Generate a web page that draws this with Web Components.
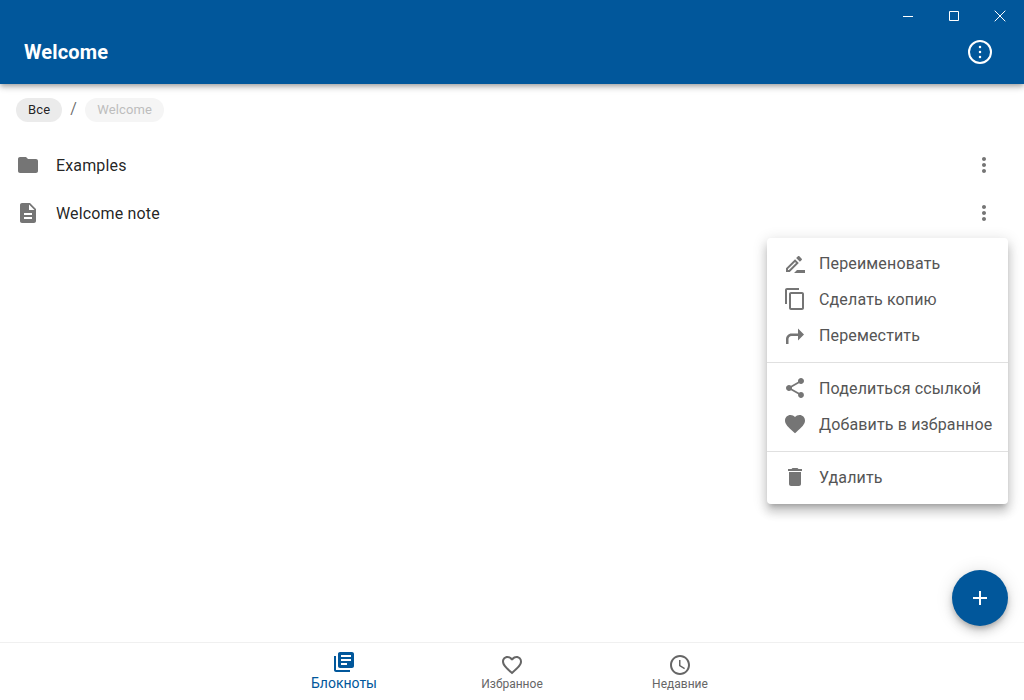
<!DOCTYPE html>
<html lang="ru">
<head>
<meta charset="utf-8">
<title>Welcome</title>
<style>
  html, body { margin: 0; height: 100%; overflow: hidden; background: #fff; }
  body { font-family: Roboto, "Liberation Sans", sans-serif; }
</style>
</head>
<body>
<app-shell>
  <app-header slot="header" title="Welcome"></app-header>
  <bread-crumbs>
    <crumb-chip>Все</crumb-chip>
    <crumb-chip disabled>Welcome</crumb-chip>
  </bread-crumbs>
  <list-row icon="folder">Examples</list-row>
  <list-row icon="note">Welcome note</list-row>
  <context-menu slot="overlay">
    <menu-item icon="rename">Переименовать</menu-item>
    <menu-item icon="copy">Сделать копию</menu-item>
    <menu-item icon="move">Переместить</menu-item>
    <menu-divider></menu-divider>
    <menu-item icon="share">Поделиться ссылкой</menu-item>
    <menu-item icon="heart">Добавить в избранное</menu-item>
    <menu-divider></menu-divider>
    <menu-item icon="trash">Удалить</menu-item>
  </context-menu>
  <fab-button slot="overlay"></fab-button>
  <bottom-nav slot="footer">
    <nav-item icon="books" active>Блокноты</nav-item>
    <nav-item icon="heart-line">Избранное</nav-item>
    <nav-item icon="clock">Недавние</nav-item>
  </bottom-nav>
</app-shell>

<script>
const ICONS = {
  folder: 'M10 4H4c-1.1 0-1.99.9-1.99 2L2 18c0 1.1.9 2 2 2h16c1.1 0 2-.9 2-2V8c0-1.1-.9-2-2-2h-8l-2-2z',
  note: 'M14 2H6c-1.1 0-1.99.9-1.99 2L4 20c0 1.1.89 2 1.99 2H18c1.1 0 2-.9 2-2V8l-6-6zm2 16H8v-2h8v2zm0-4H8v-2h8v2zm-3-5V3.5L18.5 9H13z',
  more: 'M12 8c1.1 0 2-.9 2-2s-.9-2-2-2-2 .9-2 2 .9 2 2 2zm0 2c-1.1 0-2 .9-2 2s.9 2 2 2 2-.9 2-2-.9-2-2-2zm0 6c-1.1 0-2 .9-2 2s.9 2 2 2 2-.9 2-2-.9-2-2-2z',
  rename: 'M11 22l3-3h8v3zM12.06 8.19L3 17.25V21h3.75l9.06-9.06-3.75-3.75zM5.92 19H5v-.92l7.06-7.06.92.92L5.92 19zM18.71 9.04c.39-.39.39-1.02 0-1.41l-2.34-2.34c-.2-.2-.45-.29-.71-.29s-.51.1-.7.29l-1.83 1.83 3.75 3.75 1.83-1.83z',
  copy: 'M16 1H4c-1.1 0-2 .9-2 2v14h2V3h12V1zm3 4H8c-1.1 0-2 .9-2 2v14c0 1.1.9 2 2 2h11c1.1 0 2-.9 2-2V7c0-1.1-.9-2-2-2zm0 16H8V7h11v14z',
  move: 'M21 11.5l-6-6v5H8.5C5.5 10.5 3 13 3 16v5h2.5v-5c0-1.5 1.2-3 3-3H15v4.5z',
  share: 'M18 16.08c-.76 0-1.44.3-1.96.77L8.91 12.7c.05-.23.09-.46.09-.7s-.04-.47-.09-.7l7.05-4.11c.54.5 1.25.81 2.04.81 1.66 0 3-1.34 3-3s-1.34-3-3-3-3 1.34-3 3c0 .24.04.47.09.7L8.04 9.81C7.5 9.31 6.79 9 6 9c-1.66 0-3 1.34-3 3s1.34 3 3 3c.79 0 1.5-.31 2.04-.81l7.12 4.16c-.05.21-.08.43-.08.65 0 1.61 1.31 2.92 2.92 2.92s2.92-1.31 2.92-2.92-1.31-2.92-2.92-2.92z',
  heart: 'M12 21.35l-1.45-1.32C5.4 15.36 2 12.28 2 8.5 2 5.42 4.42 3 7.5 3c1.74 0 3.41.81 4.5 2.09C13.09 3.81 14.76 3 16.5 3 19.58 3 22 5.42 22 8.5c0 3.78-3.4 6.86-8.55 11.54L12 21.35z',
  'heart-line': 'M16.5 3c-1.74 0-3.41.81-4.5 2.09C10.91 3.81 9.24 3 7.5 3 4.42 3 2 5.42 2 8.5c0 3.78 3.4 6.86 8.55 11.54L12 21.35l1.45-1.32C18.6 15.36 22 12.28 22 8.5 22 5.42 19.58 3 16.5 3zm-4.4 15.55l-.1.1-.1-.1C7.14 14.24 4 11.39 4 8.5 4 6.5 5.5 5 7.5 5c1.54 0 3.04.99 3.57 2.36h1.87C13.46 5.99 14.96 5 16.5 5c2 0 3.5 1.5 3.5 3.5 0 2.89-3.14 5.74-7.9 10.05z',
  trash: 'M6 19c0 1.1.9 2 2 2h8c1.1 0 2-.9 2-2V7H6v12zM19 4h-3.5l-1-1h-5l-1 1H5v2h14V4z',
  books: 'M4 6H2v14c0 1.1.9 2 2 2h14v-2H4V6zm16-4H8c-1.1 0-2 .9-2 2v12c0 1.1.9 2 2 2h12c1.1 0 2-.9 2-2V4c0-1.1-.9-2-2-2zm-1 9H9V9h10v2zm-4 4H9v-2h6v2zm4-8H9V5h10v2z',
  clock: 'M11.99 2C6.47 2 2 6.48 2 12s4.47 10 9.99 10C17.52 22 22 17.52 22 12S17.52 2 11.99 2zM12 20c-4.42 0-8-3.58-8-8s3.58-8 8-8 8 3.58 8 8-3.58 8-8 8zm.5-13H11v6l5.25 3.15.75-1.23-4.5-2.67z',
  plus: 'M19 13h-6v6h-2v-6H5v-2h6V5h2v6h6v2z',
  'more-circle': 'M12 0a12 12 0 1 0 0 24a12 12 0 1 0 0-24zm0 2a10 10 0 1 1 0 20a10 10 0 1 1 0-20zM12 5.75a1.25 1.25 0 1 0 0 2.5a1.25 1.25 0 1 0 0-2.5zM12 10.75a1.25 1.25 0 1 0 0 2.5a1.25 1.25 0 1 0 0-2.5zM12 15.75a1.25 1.25 0 1 0 0 2.5a1.25 1.25 0 1 0 0-2.5z'
};

class MatIcon extends HTMLElement {
  connectedCallback() {
    const size = this.getAttribute('size') || 24;
    this.attachShadow({ mode: 'open' });
    this.shadowRoot.innerHTML = `
      <style>
        :host { display: block; width: ${size}px; height: ${size}px; flex: none; }
        svg { display: block; width: 100%; height: 100%; fill: currentColor; }
      </style>
      <svg viewBox="0 0 24 24"><path d="${ICONS[this.getAttribute('name')]}"></path></svg>
    `;
  }
}
customElements.define('mat-icon', MatIcon);

class AppShell extends HTMLElement {
  connectedCallback() {
    this.attachShadow({ mode: 'open' });
    this.shadowRoot.innerHTML = `
      <style>
        :host { display: flex; flex-direction: column; height: 700px; color: rgba(0,0,0,.87); }
        main { flex: 1; position: relative; min-height: 0; padding-top: 14px; }
      </style>
      <slot name="header"></slot>
      <main>
        <slot></slot>
        <slot name="overlay"></slot>
      </main>
      <slot name="footer"></slot>
    `;
  }
}
customElements.define('app-shell', AppShell);

class AppHeader extends HTMLElement {
  connectedCallback() {
    this.attachShadow({ mode: 'open' });
    this.shadowRoot.innerHTML = `
      <style>
        :host {
          display: block;
          position: relative;
          z-index: 2;
          height: 84px;
          padding-top: 20px;
          box-sizing: border-box;
          background: #01579b;
          color: #fff;
          box-shadow: 0 2px 4px -1px rgba(0,0,0,.2), 0 4px 5px 0 rgba(0,0,0,.14), 0 1px 10px 0 rgba(0,0,0,.12);
        }
        .bar { display: flex; align-items: center; height: 64px; padding: 0 32px 0 24px; }
        h1 { flex: 1; margin: 0; font-size: 20px; font-weight: 700; letter-spacing: .15px; }
        .win { position: absolute; top: 0; right: 1px; display: flex; }
        .win span { display: flex; align-items: center; justify-content: center; width: 46px; height: 32px; }
        .win svg { display: block; width: 12px; height: 12px; fill: none; stroke: #fff; stroke-width: 1; }
      </style>
      <div class="bar">
        <h1>${this.getAttribute('title')}</h1>
        <mat-icon name="more-circle"></mat-icon>
      </div>
      <div class="win">
        <span><svg viewBox="0 0 12 12"><path d="M1 6.5h10"></path></svg></span>
        <span><svg viewBox="0 0 12 12"><path d="M1.5 1.5h9v9h-9z"></path></svg></span>
        <span><svg viewBox="0 0 12 12"><path d="M.7.7l10.6 10.6M11.3.7L.7 11.3"></path></svg></span>
      </div>
    `;
  }
}
customElements.define('app-header', AppHeader);

class BreadCrumbs extends HTMLElement {
  connectedCallback() {
    this.attachShadow({ mode: 'open' });
    this.shadowRoot.innerHTML = `
      <style>
        :host { display: flex; align-items: center; height: 24px; padding: 0 16px; margin-bottom: 19px; }
        ::slotted(crumb-chip:not(:first-child)) { margin-left: 23px; }
      </style>
      <slot></slot>
    `;
  }
}
customElements.define('bread-crumbs', BreadCrumbs);

class CrumbChip extends HTMLElement {
  connectedCallback() {
    const off = this.hasAttribute('disabled');
    this.attachShadow({ mode: 'open' });
    this.shadowRoot.innerHTML = `
      <style>
        :host { display: block; position: relative; }
        .chip {
          display: flex;
          align-items: center;
          height: 24px;
          padding: 0 12px 1px;
          box-sizing: border-box;
          border-radius: 12px;
          font-size: 13px;
          letter-spacing: .14px;
          background: ${off ? '#f5f5f5' : '#ebebeb'};
          color: ${off ? '#bdbdbd' : 'rgba(0,0,0,.87)'};
        }
        .slash { position: absolute; left: -15px; top: 0; line-height: 22px; font-size: 16px; color: rgba(0,0,0,.6); }
      </style>
      ${off ? '<span class="slash">/</span>' : ''}
      <div class="chip"><slot></slot></div>
    `;
  }
}
customElements.define('crumb-chip', CrumbChip);

class ListRow extends HTMLElement {
  connectedCallback() {
    this.attachShadow({ mode: 'open' });
    this.shadowRoot.innerHTML = `
      <style>
        :host { display: flex; align-items: center; height: 48px; padding: 0 28px 0 16px; font-size: 16px; letter-spacing: .15px; color: rgba(0,0,0,.87); }
        mat-icon { color: #757575; }
        .label { flex: 1; margin-left: 16px; }
      </style>
      <mat-icon name="${this.getAttribute('icon')}"></mat-icon>
      <div class="label"><slot></slot></div>
      <mat-icon name="more"></mat-icon>
    `;
  }
}
customElements.define('list-row', ListRow);

class ContextMenu extends HTMLElement {
  connectedCallback() {
    this.attachShadow({ mode: 'open' });
    this.shadowRoot.innerHTML = `
      <style>
        :host {
          display: block;
          position: absolute;
          top: 154px;
          right: 16px;
          width: 241px;
          padding: 7px 0 9px;
          box-sizing: border-box;
          background: #fff;
          border-radius: 4px;
          box-shadow: 0 5px 5px -3px rgba(0,0,0,.2), 0 8px 10px 1px rgba(0,0,0,.14), 0 3px 14px 2px rgba(0,0,0,.12);
        }
      </style>
      <slot></slot>
    `;
  }
}
customElements.define('context-menu', ContextMenu);

class MenuItem extends HTMLElement {
  connectedCallback() {
    this.attachShadow({ mode: 'open' });
    this.shadowRoot.innerHTML = `
      <style>
        :host { display: flex; align-items: center; height: 36px; padding-left: 16px; font-size: 16px; letter-spacing: .15px; white-space: nowrap; color: #555; }
        mat-icon { color: #757575; margin-right: 12px; }
      </style>
      <mat-icon name="${this.getAttribute('icon')}"></mat-icon>
      <slot></slot>
    `;
  }
}
customElements.define('menu-item', MenuItem);

class MenuDivider extends HTMLElement {
  connectedCallback() {
    this.attachShadow({ mode: 'open' });
    this.shadowRoot.innerHTML = `
      <style>
        :host { display: block; height: 1px; margin: 9px 0 7px; background: #e0e0e0; }
      </style>
    `;
  }
}
customElements.define('menu-divider', MenuDivider);

class FabButton extends HTMLElement {
  connectedCallback() {
    this.attachShadow({ mode: 'open' });
    this.shadowRoot.innerHTML = `
      <style>
        :host {
          display: flex;
          align-items: center;
          justify-content: center;
          position: absolute;
          right: 16px;
          bottom: 16px;
          width: 56px;
          height: 56px;
          border-radius: 50%;
          background: #01579b;
          color: #fff;
          box-shadow: 0 3px 5px -1px rgba(0,0,0,.2), 0 6px 10px 0 rgba(0,0,0,.14), 0 1px 18px 0 rgba(0,0,0,.12);
        }
      </style>
      <mat-icon name="plus"></mat-icon>
    `;
  }
}
customElements.define('fab-button', FabButton);

class BottomNav extends HTMLElement {
  connectedCallback() {
    this.attachShadow({ mode: 'open' });
    this.shadowRoot.innerHTML = `
      <style>
        :host { display: flex; justify-content: center; height: 58px; box-sizing: border-box; border-top: 1px solid #f0f0f0; background: #fff; }
      </style>
      <slot></slot>
    `;
  }
}
customElements.define('bottom-nav', BottomNav);

class NavItem extends HTMLElement {
  connectedCallback() {
    const active = this.hasAttribute('active');
    this.attachShadow({ mode: 'open' });
    this.shadowRoot.innerHTML = `
      <style>
        :host {
          display: flex;
          flex-direction: column;
          align-items: center;
          width: 168px;
          padding-top: ${active ? 7 : 10}px;
          box-sizing: border-box;
          color: ${active ? '#01579b' : '#666'};
        }
        .label { font-size: ${active ? 14 : 12}px; line-height: 16px; margin-top: ${active ? 1 : -1}px; }
      </style>
      <mat-icon name="${this.getAttribute('icon')}"></mat-icon>
      <div class="label"><slot></slot></div>
    `;
  }
}
customElements.define('nav-item', NavItem);
</script>
</body>
</html>
